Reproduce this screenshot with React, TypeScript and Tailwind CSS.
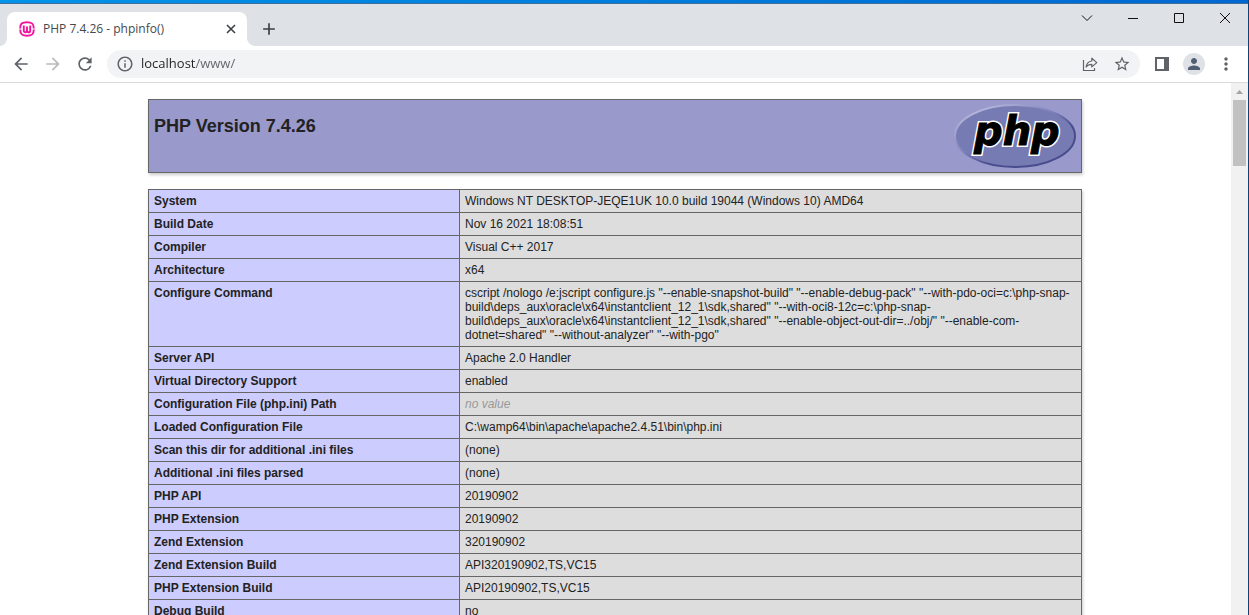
import type { ReactNode } from "react";
import {
  MdAdd,
  MdArrowBack,
  MdArrowForward,
  MdInfoOutline,
  MdMoreVert,
  MdPerson,
  MdRefresh,
  MdStarBorder,
} from "react-icons/md";

const rows: [string, string | null][] = [
  ["System", "Windows NT DESKTOP-JEQE1UK 10.0 build 19044 (Windows 10) AMD64"],
  ["Build Date", "Nov 16 2021 18:08:51"],
  ["Compiler", "Visual C++ 2017"],
  ["Architecture", "x64"],
  [
    "Configure Command",
    'cscript /nologo /e:jscript configure.js "--enable-snapshot-build" "--enable-debug-pack" "--with-pdo-oci=c:\\php-snap-build\\deps_aux\\oracle\\x64\\instantclient_12_1\\sdk,shared" "--with-oci8-12c=c:\\php-snap-build\\deps_aux\\oracle\\x64\\instantclient_12_1\\sdk,shared" "--enable-object-out-dir=../obj/" "--enable-com-dotnet=shared" "--without-analyzer" "--with-pgo"',
  ],
  ["Server API", "Apache 2.0 Handler"],
  ["Virtual Directory Support", "enabled"],
  ["Configuration File (php.ini) Path", null],
  ["Loaded Configuration File", "C:\\wamp64\\bin\\apache\\apache2.4.51\\bin\\php.ini"],
  ["Scan this dir for additional .ini files", "(none)"],
  ["Additional .ini files parsed", "(none)"],
  ["PHP API", "20190902"],
  ["PHP Extension", "20190902"],
  ["Zend Extension", "320190902"],
  ["Zend Extension Build", "API320190902,TS,VC15"],
  ["PHP Extension Build", "API20190902,TS,VC15"],
  ["Debug Build", "no"],
];

function IconButton({ label, children }: { label: string; children: ReactNode }) {
  return (
    <button
      type="button"
      aria-label={label}
      className="flex size-7 shrink-0 items-center justify-center rounded-full text-[#5f6368] hover:bg-gray-200"
    >
      {children}
    </button>
  );
}

function CaptionButton({ label, path }: { label: string; path: string }) {
  return (
    <button
      type="button"
      aria-label={label}
      className="flex h-7 w-[46px] items-center justify-center hover:bg-gray-300"
    >
      <svg width="12" height="12" viewBox="0 0 12 12" fill="none" stroke="#111" strokeWidth="1">
        <path d={path} />
      </svg>
    </button>
  );
}

function WampIcon() {
  return (
    <svg width="16" height="16" viewBox="0 0 16 16" fill="none" stroke="#f314a0" className="shrink-0">
      <path d="M1.2 7.4C1.2 2.8 2.8 1.2 8 1.2s6.8 1.6 6.8 6.2" strokeWidth="2" />
      <path d="M1.2 8.6c0 4.6 1.6 6.2 6.8 6.2s6.8-1.6 6.8-6.2" strokeWidth="2" />
      <path d="M4.8 4.4v5c0 2.6 3.2 2.4 3.2.2V5.4v4.2c0 2.2 3.2 2.4 3.2-.2v-5" strokeWidth="1.9" />
    </svg>
  );
}

function PhpLogo() {
  return (
    <svg width="124" height="66" viewBox="0 0 124 66" role="img" aria-label="PHP logo">
      <defs>
        <linearGradient id="rim" x1="0.1" y1="0" x2="0.9" y2="0.9">
          <stop offset="0.1" stopColor="#b3b5da" />
          <stop offset="0.45" stopColor="#8083bb" />
          <stop offset="0.7" stopColor="#484b8c" />
        </linearGradient>
      </defs>
      <ellipse cx="63" cy="32" rx="60" ry="31" fill="#777bb3" stroke="url(#rim)" strokeWidth="2" />
      <g fontFamily="'DejaVu Sans', sans-serif" fontSize="40" fontWeight="700" fontStyle="italic" strokeLinejoin="miter">
        <text x="22" y="41" fill="#fff" stroke="#fff" strokeWidth="4" aria-hidden="true">
          php
        </text>
        <text x="22" y="41" fill="#000" stroke="#000" strokeWidth="1">
          php
        </text>
      </g>
    </svg>
  );
}

function TabStrip() {
  return (
    <div className="flex h-[42px] shrink-0 items-end bg-[#dee1e6]">
      <svg width="7" height="8" viewBox="0 0 7 8" className="shrink-0">
        <path d="M7 0v8H0C4 8 7 4 7 0z" fill="#fff" />
      </svg>
      <div className="flex h-[34px] w-60 items-center rounded-t-lg bg-white pr-2 pl-3">
        <WampIcon />
        <span className="ml-2 grow truncate text-xs text-[#45494d]">PHP 7.4.26 - phpinfo()</span>
        <button type="button" aria-label="Close tab" className="flex size-4 items-center justify-center text-[#3c4043]">
          <svg width="10" height="10" viewBox="0 0 10 10" stroke="currentColor" strokeWidth="1.6">
            <path d="M1 1l8 8M9 1L1 9" />
          </svg>
        </button>
      </div>
      <svg width="8" height="8" viewBox="0 0 8 8" className="shrink-0">
        <path d="M0 0v8h8C4 8 0 4 0 0z" fill="#fff" />
      </svg>
      <button type="button" aria-label="New tab" className="flex h-[34px] w-7 items-center justify-center text-[#3c4043]">
        <MdAdd size={20} />
      </button>
      <div className="ml-auto flex self-start">
        <CaptionButton label="Search tabs" path="M1 3.5l5 5 5-5" />
        <CaptionButton label="Minimize" path="M1 6.5h10" />
        <CaptionButton label="Maximize" path="M1.5 1.5h9v9h-9z" />
        <CaptionButton label="Close" path="M1 1l10 10M11 1L1 11" />
      </div>
    </div>
  );
}

function Toolbar() {
  return (
    <div className="flex shrink-0 items-center gap-2 border-b border-[#d9dbde] bg-white py-1 pr-2 pl-[7px]">
      <div className="flex gap-1">
        <IconButton label="Back">
          <MdArrowBack size={20} />
        </IconButton>
        <IconButton label="Forward">
          <MdArrowForward size={20} className="text-[#b9bbbe]" />
        </IconButton>
        <IconButton label="Reload">
          <MdRefresh size={20} />
        </IconButton>
      </div>
      <div className="flex h-7 grow items-center rounded-full bg-[#f1f3f4] px-1">
        <IconButton label="View site information">
          <MdInfoOutline size={18} />
        </IconButton>
        <input
          type="text"
          aria-label="Address"
          defaultValue="localhost/www/"
          className="ml-[2px] min-w-0 grow bg-[linear-gradient(90deg,#202124_55px,#5f6368_55px)] bg-clip-text text-[13px] text-transparent caret-black outline-none"
        />
        <div className="flex gap-1">
          <IconButton label="Share this page">
            <svg width="16" height="16" viewBox="0 0 16 16" fill="none" stroke="currentColor" strokeWidth="1.2">
              <path d="M1.5 4v10.5h11V12" />
              <path d="M9.8 2.2l5 4.4-5 4.3V8.4C7 8.4 5.3 9.3 4.1 11c.4-3 2.3-5.6 5.7-6z" strokeLinejoin="round" />
            </svg>
          </IconButton>
          <IconButton label="Bookmark this tab">
            <MdStarBorder size={18} />
          </IconButton>
        </div>
      </div>
      <div className="flex gap-1">
        <IconButton label="Side panel">
          <svg width="14" height="14" viewBox="0 0 14 14">
            <path d="M0 0h14v14H0zM2 2v10h7V2z" fill="currentColor" fillRule="evenodd" />
          </svg>
        </IconButton>
        <IconButton label="Profile">
          <span className="flex size-[22px] items-center justify-center rounded-full bg-[#dee1e6] text-[#525f73]">
            <MdPerson size={18} />
          </span>
        </IconButton>
        <IconButton label="Menu">
          <MdMoreVert size={20} />
        </IconButton>
      </div>
    </div>
  );
}

function PhpInfo() {
  return (
    <main className="flex flex-col items-center gap-4 py-4 pr-px font-['Liberation_Sans',Arial,sans-serif] text-[#222]">
      <header className="flex w-full max-w-[934px] items-start justify-between border border-[#666] bg-[#9999cc] px-[5px] py-1 shadow-[1px_2px_3px_#ccc]">
        <h1 className="mt-3 text-lg leading-5 font-bold">PHP Version 7.4.26</h1>
        <a href="http://www.php.net/" className="block h-16">
          <PhpLogo />
        </a>
      </header>
      <table className="w-full max-w-[934px] border-collapse text-left text-xs leading-[14px] shadow-[1px_2px_3px_#ccc]">
        <tbody>
          {rows.map(([name, value]) => (
            <tr key={name}>
              <th scope="row" className="w-[311px] border border-[#666] bg-[#ccccff] px-[5px] py-1 align-top font-bold">
                {name}
              </th>
              <td className="border border-[#666] bg-[#dddddd] px-[5px] py-1 align-top wrap-anywhere">
                {value ?? <i className="text-[#999]">no value</i>}
              </td>
            </tr>
          ))}
        </tbody>
      </table>
    </main>
  );
}

function ScrollBar() {
  return (
    <div aria-hidden="true" className="flex w-[17px] shrink-0 flex-col items-center bg-[#f1f1f1]">
      <div className="flex h-[17px] items-center">
        <svg width="7" height="4" viewBox="0 0 7 4">
          <path d="M3.5 0L7 4H0z" fill="#a3a3a3" />
        </svg>
      </div>
      <div className="h-[66px] w-[13px] bg-[#c1c1c1]" />
    </div>
  );
}

export default function App() {
  return (
    <div className="flex h-screen flex-col overflow-hidden border-r border-[#0f4377] bg-white font-['Open_Sans','Noto_Sans',sans-serif]">
      <div className="h-1 shrink-0 border-b border-[#3f6f9c] bg-linear-to-r from-[#0093e9] to-[#0067d1]" />
      <TabStrip />
      <Toolbar />
      <div className="flex min-h-0 grow">
        <div className="grow overflow-y-auto [scrollbar-width:none]">
          <PhpInfo />
        </div>
        <ScrollBar />
      </div>
    </div>
  );
}
